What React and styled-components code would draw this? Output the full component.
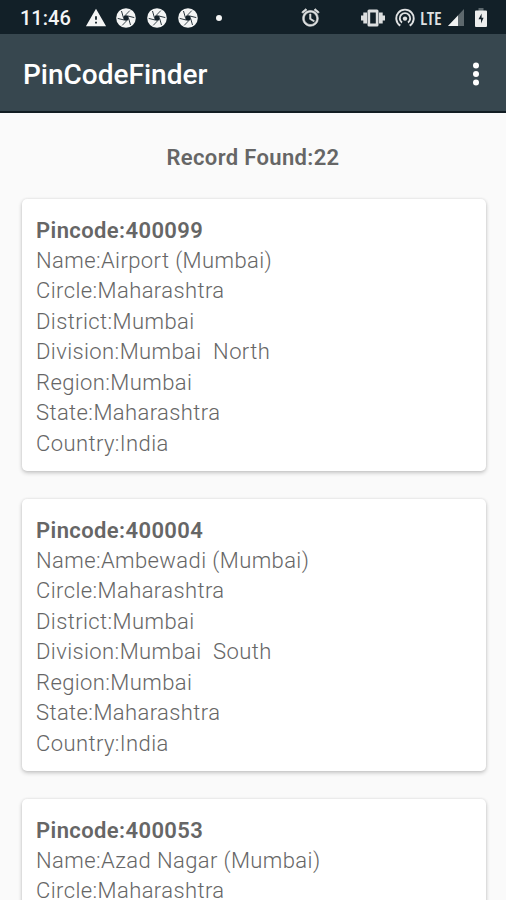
import styled, { createGlobalStyle } from "styled-components";
import { MdAlarm, MdWarning } from "react-icons/md";

const records = [
  {
    pincode: "400099",
    name: "Airport (Mumbai)",
    division: "Mumbai  North",
  },
  {
    pincode: "400004",
    name: "Ambewadi (Mumbai)",
    division: "Mumbai  South",
  },
  {
    pincode: "400053",
    name: "Azad Nagar (Mumbai)",
    division: "Mumbai  North",
  },
];

const blades = [0, 60, 120, 180, 240, 300];

const ShutterIcon = () => (
  <svg width="20" height="20" viewBox="0 0 20 20">
    <circle cx="10" cy="10" r="9.8" fill="#f4f5f5" />
    {blades.map((angle) => (
      <path
        key={angle}
        d="M9 7.600 13.800 2.600"
        stroke="#13212a"
        strokeWidth="0.8"
        transform={`rotate(${angle} 10 10)`}
      />
    ))}
    <circle cx="10" cy="10" r="2.700" fill="#13212a" />
  </svg>
);

const VibrateIcon = () => (
  <svg width="24" height="18" viewBox="0 0 24 18" fill="#dcdedf">
    <path d="M0 6.500h2.600v5H0zM2.300 3.500h3.700v11H2.300zM18 3.500h3.700v11H18zM21.400 6.500H24v5h-2.600z" />
    <path
      fillRule="evenodd"
      d="M8 .500h8a1.500 1.500 0 0 1 1.500 1.500v14a1.500 1.500 0 0 1-1.500 1.500H8A1.500 1.500 0 0 1 6.500 16V2A1.500 1.500 0 0 1 8 .500zM9.200 3.500v11h5.600v-11z"
    />
  </svg>
);

const HotspotIcon = () => (
  <svg
    width="20"
    height="20"
    viewBox="0 0 20 20"
    fill="none"
    stroke="#dfe1e2"
    strokeWidth="1.900"
  >
    <path d="M5.300 17.600a8.700 8.700 0 1 1 9.400 0" />
    <path d="M7 14.600a5.200 5.200 0 1 1 6 0" />
    <circle cx="10" cy="10.600" r="2.200" fill="#dfe1e2" stroke="none" />
  </svg>
);

const SignalIcon = () => (
  <svg width="16" height="17" viewBox="0 0 16 17">
    <path d="M0 17 16 0v17z" fill="#5d686d" />
    <path d="M0 17 10 6.400V17z" fill="#f1f2f2" />
  </svg>
);

const BatteryIcon = () => (
  <svg width="12" height="19" viewBox="0 0 12 19">
    <path d="M3.500 0h5v3h-5z" fill="#5d686d" />
    <path
      d="M1 2.500h10a1 1 0 0 1 1 1V18a1 1 0 0 1-1 1H1a1 1 0 0 1-1-1V3.500a1 1 0 0 1 1-1z"
      fill="#eceded"
    />
    <path d="M6.600 5.500 3.500 11.200h2.500V15.500L8.600 9.800H6.600z" fill="#13212a" />
  </svg>
);

const MoreIcon = () => (
  <svg width="8" height="26" viewBox="0 0 8 26" fill="#fff">
    <circle cx="4" cy="4.500" r="3" />
    <circle cx="4" cy="13" r="3" />
    <circle cx="4" cy="21.500" r="3" />
  </svg>
);

const App = () => {
  return (
    <Screen>
      <GlobalStyle />
      <StatusBar>
        <Clock>11:46</Clock>
        <Notifications>
          <MdWarning size={22} />
          <ShutterIcon />
          <ShutterIcon />
          <ShutterIcon />
          <Dot />
        </Notifications>
        <SystemIcons>
          <AlarmSlot>
            <MdAlarm size={21} />
          </AlarmSlot>
          <VibrateIcon />
          <HotspotIcon />
          <Network>LTE</Network>
          <SignalIcon />
          <BatteryIcon />
        </SystemIcons>
      </StatusBar>
      <AppBar>
        <AppTitle>PinCodeFinder</AppTitle>
        <MenuButton aria-label="More options">
          <MoreIcon />
        </MenuButton>
      </AppBar>
      <RecordCount>Record Found:22</RecordCount>
      <RecordList>
        {records.map((record) => (
          <RecordCard key={record.pincode}>
            <RecordLine $bold>Pincode:{record.pincode}</RecordLine>
            <RecordLine>Name:{record.name}</RecordLine>
            <RecordLine>Circle:Maharashtra</RecordLine>
            <RecordLine>District:Mumbai</RecordLine>
            <RecordLine>Division:{record.division}</RecordLine>
            <RecordLine>Region:Mumbai</RecordLine>
            <RecordLine>State:Maharashtra</RecordLine>
            <RecordLine>Country:India</RecordLine>
          </RecordCard>
        ))}
      </RecordList>
    </Screen>
  );
};

const GlobalStyle = createGlobalStyle`
  * {
    box-sizing: border-box;
  }

  body {
    margin: 0;
    background: #fafafa;
    font-family: Roboto, "Liberation Sans", sans-serif;
  }

  svg {
    display: block;
    flex-shrink: 0;
  }
`;

const Screen = styled.div`
  height: 900px;
  overflow: hidden;
  background: #fafafa;
`;

const StatusBar = styled.header`
  display: flex;
  align-items: center;
  height: 34px;
  padding: 1px 19px 0 20px;
  background: #122028;
  color: #f4f5f5;
`;

const Clock = styled.span`
  width: 65px;
  font-size: 20px;
  font-weight: 500;
`;

const Notifications = styled.div`
  display: flex;
  align-items: center;
  gap: 11px;

  > :first-child {
    margin-right: -2px;
  }
`;

const Dot = styled.span`
  width: 6px;
  height: 6px;
  margin-left: 7px;
  border-radius: 50%;
  background: #f4f5f5;
`;

const SystemIcons = styled.div`
  display: flex;
  align-items: center;
  margin-left: auto;
  color: #dfe1e2;

  > :nth-child(2) {
    margin-right: 10px;
  }

  > :last-child {
    margin-left: 11px;
  }
`;

const AlarmSlot = styled.div`
  margin-right: 40px;

  path:not([fill="none"]) {
    stroke: currentColor;
    stroke-width: 0.7px;
  }
`;

const Network = styled.span`
  width: 29px;
  margin-right: 4px;
  padding-left: 5px;
  font-family: "Open Sans", sans-serif;
  font-size: 18.5px;
  font-weight: 600;
  font-stretch: 86%;
  line-height: 20px;
  letter-spacing: -0.3px;
`;

const AppBar = styled.div`
  display: flex;
  align-items: center;
  justify-content: space-between;
  height: 79px;
  padding: 2px 26px 0 23px;
  border-bottom: 2px solid #121d23;
  background: #37474f;
  color: #fff;
`;

const AppTitle = styled.h1`
  margin: 0;
  padding-top: 3px;
  font-size: 28px;
  font-weight: 500;
  line-height: 34px;
`;

const MenuButton = styled.button`
  padding: 0;
  border: 0;
  background: none;
  color: #fff;
`;

const RecordCount = styled.h2`
  margin: 0;
  padding-top: 31px;
  height: 86px;
  color: #666;
  font-size: 22px;
  font-weight: 600;
  line-height: 28px;
  letter-spacing: 0.35px;
  text-align: center;
`;

const RecordList = styled.main`
  display: flex;
  flex-direction: column;
  gap: 28px;
  padding: 0 20px 0 21.5px;
`;

const RecordCard = styled.section`
  height: 272px;
  flex-shrink: 0;
  padding: 16.5px 14.5px 0;
  border-radius: 5px;
  background: #fff;
  box-shadow: 0 2px 4px rgba(0, 0, 0, 0.2), 0 0 3px rgba(0, 0, 0, 0.1);
`;

const RecordLine = styled.p`
  margin: 0;
  color: #666;
  font-size: 22px;
  font-weight: ${(props) => (props.$bold ? 600 : 300)};
  line-height: 30.45px;
  letter-spacing: 0.4px;
  white-space: pre;
`;

export default App;
